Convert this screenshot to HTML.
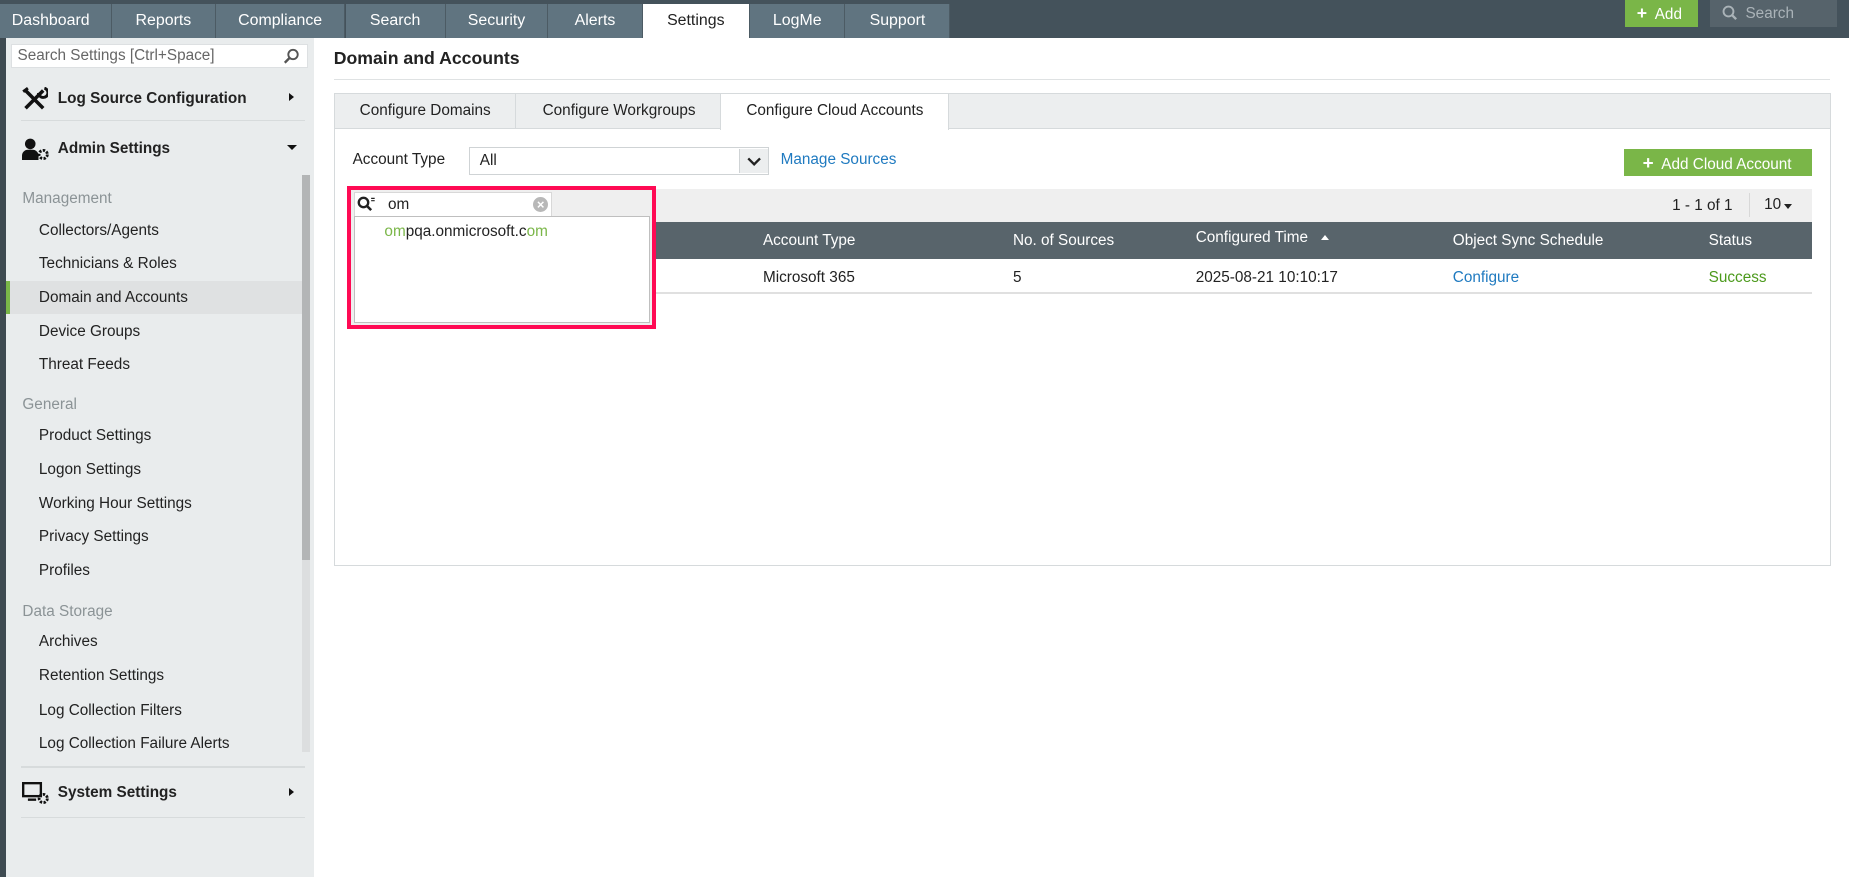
<!DOCTYPE html>
<html><head><meta charset="utf-8"><style>
*{box-sizing:border-box;margin:0;padding:0}
html,body{width:1849px;height:877px;overflow:hidden;background:#fff}
#w{zoom:1.17921;width:1568px;height:744px;position:relative;font-family:"Liberation Sans",sans-serif;font-size:13px;color:#222}
.a{position:absolute;white-space:nowrap}
.top{left:0;top:0;width:1568px;height:32px;background:#44525b}
.tab{position:absolute;top:3px;height:29px;background:#607480;color:#fff;font-size:13.5px;line-height:29px;text-align:center;border-right:1px solid #4c5b64}
.tab.on{background:#fff;color:#222;top:3px}
.side{left:5px;top:32px;width:261px;height:712px;background:#e9eced}
.si{position:absolute;left:33px;font-size:13px}
.sh{position:absolute;left:19px;color:#8b9396;font-size:13px}
.sb{position:absolute;left:49px;font-weight:bold;font-size:13px}
.ln{position:absolute;left:18px;width:241px;height:1px;background:#d7dbdc}
.th{position:absolute;top:197px;color:#fff;font-size:13px}
.td{position:absolute;top:228px;font-size:13px}
</style></head><body><div id="w">
<div class="a top"></div>
<div class="a" style="left:0;top:32px;width:5px;height:712px;background:#3e4a51"></div>
<div class="tab" style="left:0;width:95px;text-align:left;padding-left:10px">Dashboard</div>
<div class="tab" style="left:95px;width:88px">Reports</div>
<div class="tab" style="left:183px;width:110px">Compliance</div>
<div class="tab" style="left:293px;width:85px">Search</div>
<div class="tab" style="left:378px;width:87px">Security</div>
<div class="tab" style="left:465px;width:80px">Alerts</div>
<div class="tab on" style="left:545px;width:91px">Settings</div>
<div class="tab" style="left:636px;width:81px">LogMe</div>
<div class="tab" style="left:717px;width:89px">Support</div>
<div class="a" style="left:1378px;top:0;width:62px;height:23px;background:#7ab648;color:#fff;font-size:13px;line-height:23px;padding-left:10px"><b style="font-size:15px">+</b>&nbsp; Add</div>
<div class="a" style="left:1450px;top:0;width:108px;height:23px;background:#56636b;color:#aab3b8;font-size:13px;line-height:23px;padding-left:10px"><svg width="13" height="13" viewBox="0 0 13 13" style="vertical-align:-2px"><circle cx="5.5" cy="5.5" r="4.2" fill="none" stroke="#aab3b8" stroke-width="1.6"/><path d="M8.5 8.5L12 12" stroke="#aab3b8" stroke-width="2"/></svg>&nbsp; Search</div>

<div class="a side"></div>
<div class="a" style="left:9px;top:37px;width:252px;height:21px;background:#fff;border:1px solid #dde0e2;color:#666;font-size:13px;line-height:19px;padding-left:5px">Search Settings [Ctrl+Space]
<svg width="14" height="14" viewBox="0 0 14 14" style="position:absolute;right:6px;top:3px"><circle cx="8.5" cy="5.5" r="4" fill="none" stroke="#555" stroke-width="1.6"/><path d="M5.5 8.5L1.5 12.5" stroke="#555" stroke-width="2"/></svg></div>
<svg class="a" style="left:19px;top:74px" width="22" height="20" viewBox="0 0 22 20"><path d="M3 3L18 18M18 3L3 18" stroke="#111" stroke-width="3"/><path d="M1 4L5 1M14 5a4 4 0 1 0 5-4" stroke="#111" stroke-width="2.5" fill="none"/></svg>
<div class="sb" style="top:76px">Log Source Configuration</div>
<div class="a" style="left:245px;top:79px;border-left:5px solid #111;border-top:4px solid transparent;border-bottom:4px solid transparent"></div>
<div class="ln" style="top:102px"></div>
<svg class="a" style="left:19px;top:117px" width="24" height="19" viewBox="0 0 24 19"><circle cx="7" cy="5" r="4.5" fill="#111"/><path d="M0 19v-4a5 5 0 0 1 5-5h4a5 5 0 0 1 5 5v4z" fill="#111"/><circle cx="18" cy="14" r="3.5" fill="none" stroke="#111" stroke-width="2.4" stroke-dasharray="2 1.2"/></svg>
<div class="sb" style="top:119px">Admin Settings</div>
<div class="a" style="left:243px;top:123px;border-top:5px solid #111;border-left:5px solid transparent;border-right:5px solid transparent"></div>
<div class="a" style="left:256px;top:148px;width:7px;height:490px;background:#dcdedf"></div>
<div class="a" style="left:256px;top:148px;width:7px;height:327px;background:#b3b5b6"></div>
<div class="sh" style="top:161px">Management</div>
<div class="si" style="top:188px">Collectors/Agents</div>
<div class="si" style="top:216px">Technicians &amp; Roles</div>
<div class="a" style="left:5px;top:238px;width:251px;height:28px;background:#dfe1e2;border-left:4px solid #7ab648"></div>
<div class="si" style="top:245px">Domain and Accounts</div>
<div class="si" style="top:274px">Device Groups</div>
<div class="si" style="top:302px">Threat Feeds</div>
<div class="sh" style="top:336px">General</div>
<div class="si" style="top:362px">Product Settings</div>
<div class="si" style="top:391px">Logon Settings</div>
<div class="si" style="top:420px">Working Hour Settings</div>
<div class="si" style="top:448px">Privacy Settings</div>
<div class="si" style="top:477px">Profiles</div>
<div class="sh" style="top:511px">Data Storage</div>
<div class="si" style="top:537px">Archives</div>
<div class="si" style="top:566px">Retention Settings</div>
<div class="si" style="top:595px">Log Collection Filters</div>
<div class="si" style="top:623px">Log Collection Failure Alerts</div>
<div class="ln" style="top:650px"></div>
<svg class="a" style="left:19px;top:663px" width="24" height="19" viewBox="0 0 24 19"><rect x="1" y="1" width="15" height="11" fill="none" stroke="#111" stroke-width="2"/><path d="M5 15h7" stroke="#111" stroke-width="2"/><circle cx="18" cy="14" r="3.5" fill="none" stroke="#111" stroke-width="2.4" stroke-dasharray="2 1.2"/></svg>
<div class="sb" style="top:665px">System Settings</div>
<div class="a" style="left:245px;top:668px;border-left:5px solid #111;border-top:4px solid transparent;border-bottom:4px solid transparent"></div>
<div class="ln" style="top:693px"></div>

<div class="a" style="left:283px;top:41px;font-size:15px;font-weight:bold;color:#222">Domain and Accounts</div>
<div class="a" style="left:283px;top:67px;width:1269px;height:1px;background:#dfe2e3"></div>
<div class="a" style="left:283px;top:79px;width:1270px;height:401px;border:1px solid #d6dadc"></div>
<div class="a" style="left:284px;top:80px;width:1268px;height:29px;background:#eceeef;border-bottom:1px solid #d6dadc"></div>
<div class="a" style="left:284px;top:80px;width:154px;height:29px;border-right:1px solid #d6dadc;line-height:28px;text-align:center;font-size:13px">Configure Domains</div>
<div class="a" style="left:438px;top:80px;width:174px;height:29px;line-height:28px;text-align:center;font-size:13px">Configure Workgroups</div>
<div class="a" style="left:611px;top:80px;width:194px;height:30px;background:#fff;border-left:1px solid #d6dadc;border-right:1px solid #d6dadc;line-height:28px;text-align:center;font-size:13px">Configure Cloud Accounts</div>

<div class="a" style="left:299px;top:128px">Account Type</div>
<div class="a" style="left:398px;top:125px;width:254px;height:23px;border:1px solid #cfd3d5;padding-left:8px;line-height:22px">All</div>
<div class="a" style="left:627px;top:126px;width:24px;height:21px;background:#eceeef;border-left:1px solid #cfd3d5"><svg width="24" height="21" viewBox="0 0 24 21"><path d="M7 8l5 5 5-5" fill="none" stroke="#222" stroke-width="2"/></svg></div>
<div class="a" style="left:662px;top:128px;color:#1f7ac0">Manage Sources</div>
<div class="a" style="left:1377px;top:126px;width:160px;height:23px;background:#7ab648;color:#fff;line-height:23px;padding-left:16px"><b style="font-size:16px">+</b>&nbsp; Add Cloud Account</div>

<div class="a" style="left:298px;top:160px;width:1239px;height:28px;background:#efefef"></div>
<div class="a" style="left:1418px;top:167px">1 - 1 of 1</div>
<div class="a" style="left:1483px;top:164px;width:1px;height:20px;background:#d8d8d8"></div>
<div class="a" style="left:1496px;top:166px">10</div>
<div class="a" style="left:1513px;top:173px;border-top:5px solid #222;border-left:4px solid transparent;border-right:4px solid transparent"></div>
<div class="a" style="left:298px;top:188px;width:1239px;height:32px;background:#58646b"></div>
<div class="th" style="left:647px">Account Type</div>
<div class="th" style="left:859px">No. of Sources</div>
<div class="th" style="left:1014px;top:194px">Configured Time</div>
<div class="a" style="left:1120px;top:199px;border-bottom:5px solid #fff;border-left:4px solid transparent;border-right:4px solid transparent"></div>
<div class="th" style="left:1232px">Object Sync Schedule</div>
<div class="th" style="left:1449px">Status</div>
<div class="a" style="left:298px;top:248px;width:1239px;height:1px;background:#e0e0e0"></div>
<div class="td" style="left:647px">Microsoft 365</div>
<div class="td" style="left:859px">5</div>
<div class="td" style="left:1014px">2025-08-21 10:10:17</div>
<div class="td" style="left:1232px;color:#1f7ac0">Configure</div>
<div class="td" style="left:1449px;color:#4c9a1c">Success</div>

<div class="a" style="left:294px;top:158px;width:262px;height:121px;border:4px solid #ff0a54;background:#efefef"></div>
<div class="a" style="left:300px;top:163px;width:168px;height:21px;background:#fff;border:1px solid #d8d8d8"></div>
<svg class="a" style="left:303px;top:166px" width="16" height="14" viewBox="0 0 16 14"><circle cx="5.5" cy="5.5" r="4" fill="none" stroke="#222" stroke-width="2"/><path d="M8.5 8.5L12 12" stroke="#222" stroke-width="2.2"/><path d="M12 2h3M12 4h3" stroke="#222" stroke-width="1"/></svg>
<div class="a" style="left:329px;top:166px;font-size:13px">om</div>
<div class="a" style="left:452px;top:167px;width:13px;height:13px;border-radius:50%;background:#b8b8b8;color:#fff;font-size:11px;line-height:13px;text-align:center;font-weight:bold">×</div>
<div class="a" style="left:300px;top:183px;width:251px;height:91px;background:#fff;border:1px solid #bfbfbf"></div>
<div class="a" style="left:326px;top:189px;font-size:13px"><span style="color:#7ab648">om</span>pqa.onmicrosoft.c<span style="color:#7ab648">om</span></div>
</div></body></html>
